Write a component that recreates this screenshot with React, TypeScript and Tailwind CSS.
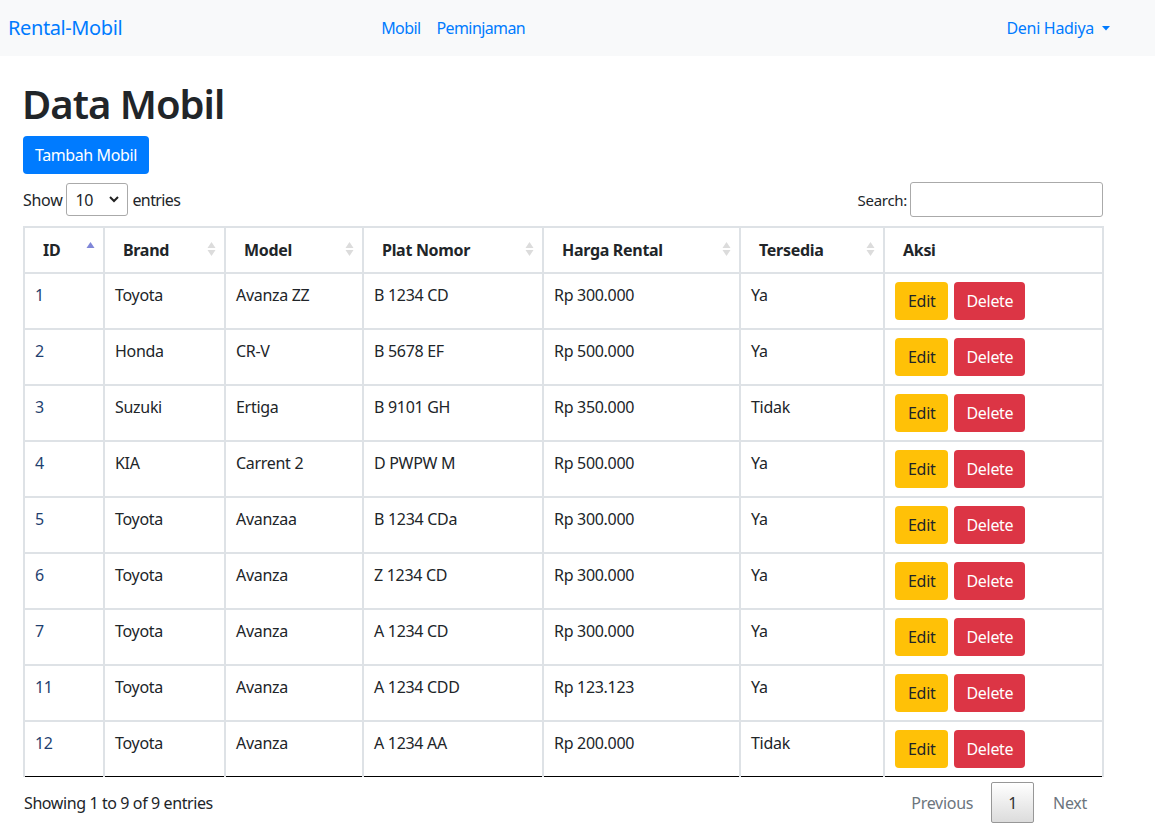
import React from "react";

const rows = [
  ["1", "Toyota", "Avanza ZZ", "B 1234 CD", "Rp 300.000", "Ya"],
  ["2", "Honda", "CR-V", "B 5678 EF", "Rp 500.000", "Ya"],
  ["3", "Suzuki", "Ertiga", "B 9101 GH", "Rp 350.000", "Tidak"],
  ["4", "KIA", "Carrent 2", "D PWPW M", "Rp 500.000", "Ya"],
  ["5", "Toyota", "Avanzaa", "B 1234 CDa", "Rp 300.000", "Ya"],
  ["6", "Toyota", "Avanza", "Z 1234 CD", "Rp 300.000", "Ya"],
  ["7", "Toyota", "Avanza", "A 1234 CD", "Rp 300.000", "Ya"],
  ["11", "Toyota", "Avanza", "A 1234 CDD", "Rp 123.123", "Ya"],
  ["12", "Toyota", "Avanza", "A 1234 AA", "Rp 200.000", "Tidak"],
];

function SortIcon({ active }: { active?: boolean }) {
  return (
    <svg width="9" height="16" viewBox="0 0 9 16" className="absolute right-[8px] top-[13px]">
      <path d="M4.5 1 L8.5 7 L0.5 7 Z" fill={active ? "#7f86d8" : "#dcdcdc"} />
      {!active && <path d="M4.5 15 L8.5 9 L0.5 9 Z" fill="#dcdcdc" />}
    </svg>
  );
}

const headers = [
  { t: "ID", w: "w-[80px]", sort: true, active: true },
  { t: "Brand", w: "w-[121px]", sort: true },
  { t: "Model", w: "w-[138px]", sort: true },
  { t: "Plat Nomor", w: "w-[180px]", sort: true },
  { t: "Harga Rental", w: "w-[197px]", sort: true },
  { t: "Tersedia", w: "w-[144px]", sort: true },
  { t: "Aksi", w: "w-[219px]", sort: false },
];

export default function App() {
  return (
    <div className="min-h-screen bg-white text-[#212529] text-[16px] leading-[24px]" style={{ fontFamily: '"Noto Sans", "Open Sans", sans-serif' }}>
      <nav className="h-[56px] bg-[#f8f9fa] flex items-center pl-[8px]">
        <span className="text-[20px] text-[#007bff] tracking-[-0.4px]">Rental-Mobil</span>
        <div className="flex ml-[259px] gap-[16px] text-[#007bff] tracking-[-0.6px]">
          <span>Mobil</span>
          <span>Peminjaman</span>
        </div>
        <div className="ml-auto mr-[45px] flex items-center text-[#007bff] tracking-[-0.3px]">
          <span>Deni Hadiya</span>
          <svg width="8" height="5" viewBox="0 0 8 5" className="ml-[8px]">
            <path d="M0 0 L8 0 L4 4.5 Z" fill="#007bff" />
          </svg>
        </div>
      </nav>
      <div className="ml-[24px] w-[1079px]">
        <h1 className="text-[40px] leading-[48px] font-semibold mt-[24px] mb-[8px] tracking-[-1px] -ml-[2px]">Data Mobil</h1>
        <button className="h-[38px] px-[12px] rounded-[4px] bg-[#007bff] text-white tracking-[-0.4px] -ml-[1px]">Tambah Mobil</button>
        <div className="flex justify-between items-center mt-[8px] h-[35px] tracking-[-0.3px]">
          <div className="flex items-center">
            <span className="-ml-[1px]">Show</span>
            <div className="ml-[4px] w-[62px] h-[33px] border border-[#aaa] rounded-[3px] flex items-center justify-between pl-[8px] pr-[8px]">
              <span>10</span>
              <svg width="10" height="7" viewBox="0 0 10 7"><path d="M1 1 L5 5 L9 1" stroke="#222" strokeWidth="2" fill="none" /></svg>
            </div>
            <span className="ml-[4px] tracking-[-0.6px]">entries</span>
          </div>
          <div className="flex items-center">
            <span className="text-[15px]">Search:</span>
            <div className="ml-[3px] w-[193px] h-[35px] border border-[#aaa] rounded-[3px] bg-white" />
          </div>
        </div>
        <table className="mt-[9px] w-[1079px] table-fixed border-collapse -ml-[1px]">
          <thead>
            <tr>
              {headers.map((h) => (
                <th key={h.t} className={`${h.w} relative text-left font-bold border-2 border-[#dee2e6] border-b-black border-b-[1px] pl-[18px] pr-[10px] py-[10px] tracking-[-0.3px]`}>
                  {h.t}
                  {h.sort && <SortIcon active={h.active} />}
                </th>
              ))}
            </tr>
          </thead>
          <tbody>
            {rows.map((r, i) => (
              <tr key={i}>
                {r.map((c, j) => (
                  <td key={j} className={`border-2 border-[#dee2e6] ${i === rows.length - 1 ? "border-b-black border-b-[1px]" : ""} align-top pl-[10px] pr-[10px] pt-[9px] pb-[10px] tracking-[-0.3px] ${j === 0 ? "text-[#1f3f6f]" : ""}`}>{c}</td>
                ))}
                <td className={`border-2 border-[#dee2e6] ${i === rows.length - 1 ? "border-b-black border-b-[1px]" : ""} pl-[10px] py-[8px] align-top`}>
                  <div className="flex gap-[6px]">
                    <button className="h-[38px] px-[13px] rounded-[4px] bg-[#ffc107] text-[#212529] tracking-[-0.3px]">Edit</button>
                    <button className="h-[38px] px-[12px] rounded-[4px] bg-[#dc3545] text-white tracking-[-0.3px]">Delete</button>
                  </div>
                </td>
              </tr>
            ))}
          </tbody>
        </table>
        <div className="flex justify-between items-center mt-[5px] tracking-[-0.3px]">
          <span className="tracking-[-0.4px]">Showing 1 to 9 of 9 entries</span>
          <div className="flex items-center text-[#6c757d]">
            <span className="px-[18px]">Previous</span>
            <span className="w-[43px] h-[41px] flex items-center justify-center border border-[#979797] rounded-[2px] bg-gradient-to-b from-white to-[#dcdcdc] text-[#333]">1</span>
            <span className="pl-[19px] pr-[16px]">Next</span>
          </div>
        </div>
      </div>
    </div>
  );
}
